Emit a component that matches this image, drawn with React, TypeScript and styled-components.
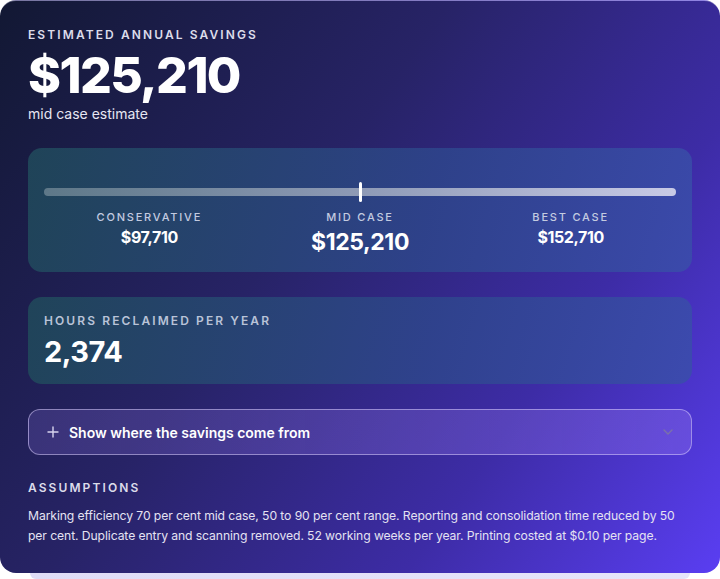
import React from 'react';
import styled, {createGlobalStyle} from 'styled-components';

const GlobalStyle = createGlobalStyle`
  html, body {
    margin: 0;
    padding: 0;
    background: #ffffff;
  }
  body {
    font-family: Inter, "Noto Sans", "DejaVu Sans", sans-serif;
    -webkit-font-smoothing: antialiased;
  }
  * {
    box-sizing: border-box;
  }
`;

const Stack = styled.div`
  width: 720px;
`;

const Card = styled.section`
  width: 720px;
  height: 573px;
  border-radius: 16px;
  border-top: 1px solid rgba(190, 190, 215, 0.55);
  background: linear-gradient(125deg, #121833 0%, #272366 40%, #3d2ca6 72%, #5a3ef2 100%);
  color: #ffffff;
  padding: 26px 28px 0 28px;
  display: flex;
  flex-direction: column;
`;

const Peek = styled.div`
  width: 660px;
  height: 6px;
  margin: 0 auto;
  border-radius: 0 0 10px 10px;
  background: linear-gradient(90deg, #dfdcf7, #e6e4fa);
`;

const Eyebrow = styled.div<{$muted?: boolean}>`
  font-size: 12px;
  line-height: 16px;
  font-weight: 600;
  letter-spacing: 2.1px;
  text-transform: uppercase;
  color: ${p => (p.$muted ? '#b9c3d8' : '#dcdcea')};
`;

const BigAmount = styled.div`
  margin-top: 4px;
  font-size: 50px;
  line-height: 56px;
  font-weight: 800;
  letter-spacing: -1.6px;
`;

const Caption = styled.div`
  margin-top: 2px;
  font-size: 14px;
  line-height: 18px;
  color: #e6e6f2;
`;

const Panel = styled.div`
  border-radius: 14px;
  background: linear-gradient(100deg, rgba(32, 72, 90, 0.9) 0%, rgba(46, 70, 140, 0.85) 60%, rgba(58, 78, 170, 0.85) 100%);
  padding: 16px 16px;
`;

const RangePanel = styled(Panel)`
  margin-top: 25px;
  height: 124px;
  padding-top: 40px;
`;

const Track = styled.div`
  position: relative;
  height: 8px;
  border-radius: 4px;
  background: linear-gradient(90deg, #5e7888 0%, #8e9ab6 50%, #c8cae6 100%);
`;

const Marker = styled.div`
  position: absolute;
  left: 50%;
  top: -6px;
  width: 3px;
  height: 20px;
  margin-left: -1.5px;
  border-radius: 2px;
  background: #ffffff;
`;

const Cases = styled.div`
  display: grid;
  grid-template-columns: repeat(3, 1fr);
  margin-top: 14px;
`;

const CaseCol = styled.div`
  display: flex;
  flex-direction: column;
  align-items: center;
`;

const CaseLabel = styled.div`
  font-size: 11px;
  line-height: 14px;
  font-weight: 500;
  letter-spacing: 1.8px;
  color: #c3cbe0;
`;

const CaseValue = styled.div<{$big?: boolean}>`
  margin-top: ${p => (p.$big ? '4px' : '3px')};
  font-size: ${p => (p.$big ? '23px' : '16px')};
  line-height: ${p => (p.$big ? '28px' : '20px')};
  font-weight: 700;
  letter-spacing: -0.4px;
`;

const HoursPanel = styled(Panel)`
  margin-top: 25px;
  height: 87px;
  padding-top: 16px;
`;

const HoursValue = styled.div`
  margin-top: 6px;
  font-size: 29px;
  line-height: 34px;
  font-weight: 700;
  letter-spacing: -0.5px;
`;

const Disclosure = styled.button`
  margin-top: 25px;
  height: 46px;
  width: 100%;
  display: flex;
  align-items: center;
  gap: 10px;
  padding: 0 18px 0 18px;
  border: 1px solid rgba(225, 215, 255, 0.5);
  border-radius: 12px;
  background: linear-gradient(90deg, rgba(120, 100, 200, 0.28), rgba(150, 120, 240, 0.35));
  color: #ffffff;
  font-family: inherit;
  font-size: 14px;
  font-weight: 600;
  text-align: left;
  cursor: pointer;
`;

const DisclosureText = styled.span`
  flex: 1;
`;

const Assumptions = styled.div`
  margin-top: 25px;
`;

const Body = styled.p`
  margin: 10px 0 0 0;
  font-size: 12.2px;
  line-height: 20px;
  letter-spacing: -0.1px;
  color: #e4e2f2;
`;

const PlusIcon = () => (
  <svg width="12" height="12" viewBox="0 0 12 12" fill="none">
    <path d="M6 1v10M1 6h10" stroke="#d8d4ee" strokeWidth="1.4" strokeLinecap="round" />
  </svg>
);

const ChevronIcon = () => (
  <svg width="10" height="6" viewBox="0 0 10 6" fill="none">
    <path d="M1 1l4 4 4-4" stroke="#7a72a8" strokeWidth="1.4" strokeLinecap="round" strokeLinejoin="round" />
  </svg>
);

const cases = [
  {label: 'CONSERVATIVE', value: '$97,710'},
  {label: 'MID CASE', value: '$125,210', big: true},
  {label: 'BEST CASE', value: '$152,710'},
];

export default function App() {
  return (
    <>
      <GlobalStyle />
      <Stack>
        <Card>
          <Eyebrow>Estimated annual savings</Eyebrow>
          <BigAmount>$125,210</BigAmount>
          <Caption>mid case estimate</Caption>

          <RangePanel>
            <Track>
              <Marker />
            </Track>
            <Cases>
              {cases.map(c => (
                <CaseCol key={c.label}>
                  <CaseLabel>{c.label}</CaseLabel>
                  <CaseValue $big={c.big}>{c.value}</CaseValue>
                </CaseCol>
              ))}
            </Cases>
          </RangePanel>

          <HoursPanel>
            <Eyebrow $muted>Hours reclaimed per year</Eyebrow>
            <HoursValue>2,374</HoursValue>
          </HoursPanel>

          <Disclosure type="button">
            <PlusIcon />
            <DisclosureText>Show where the savings come from</DisclosureText>
            <ChevronIcon />
          </Disclosure>

          <Assumptions>
            <Eyebrow>Assumptions</Eyebrow>
            <Body>
              Marking efficiency 70 per cent mid case, 50 to 90 per cent range. Reporting and consolidation time
              reduced by 50 per cent. Duplicate entry and scanning removed. 52 working weeks per year. Printing
              costed at $0.10 per page.
            </Body>
          </Assumptions>
        </Card>
        <Peek />
      </Stack>
    </>
  );
}
